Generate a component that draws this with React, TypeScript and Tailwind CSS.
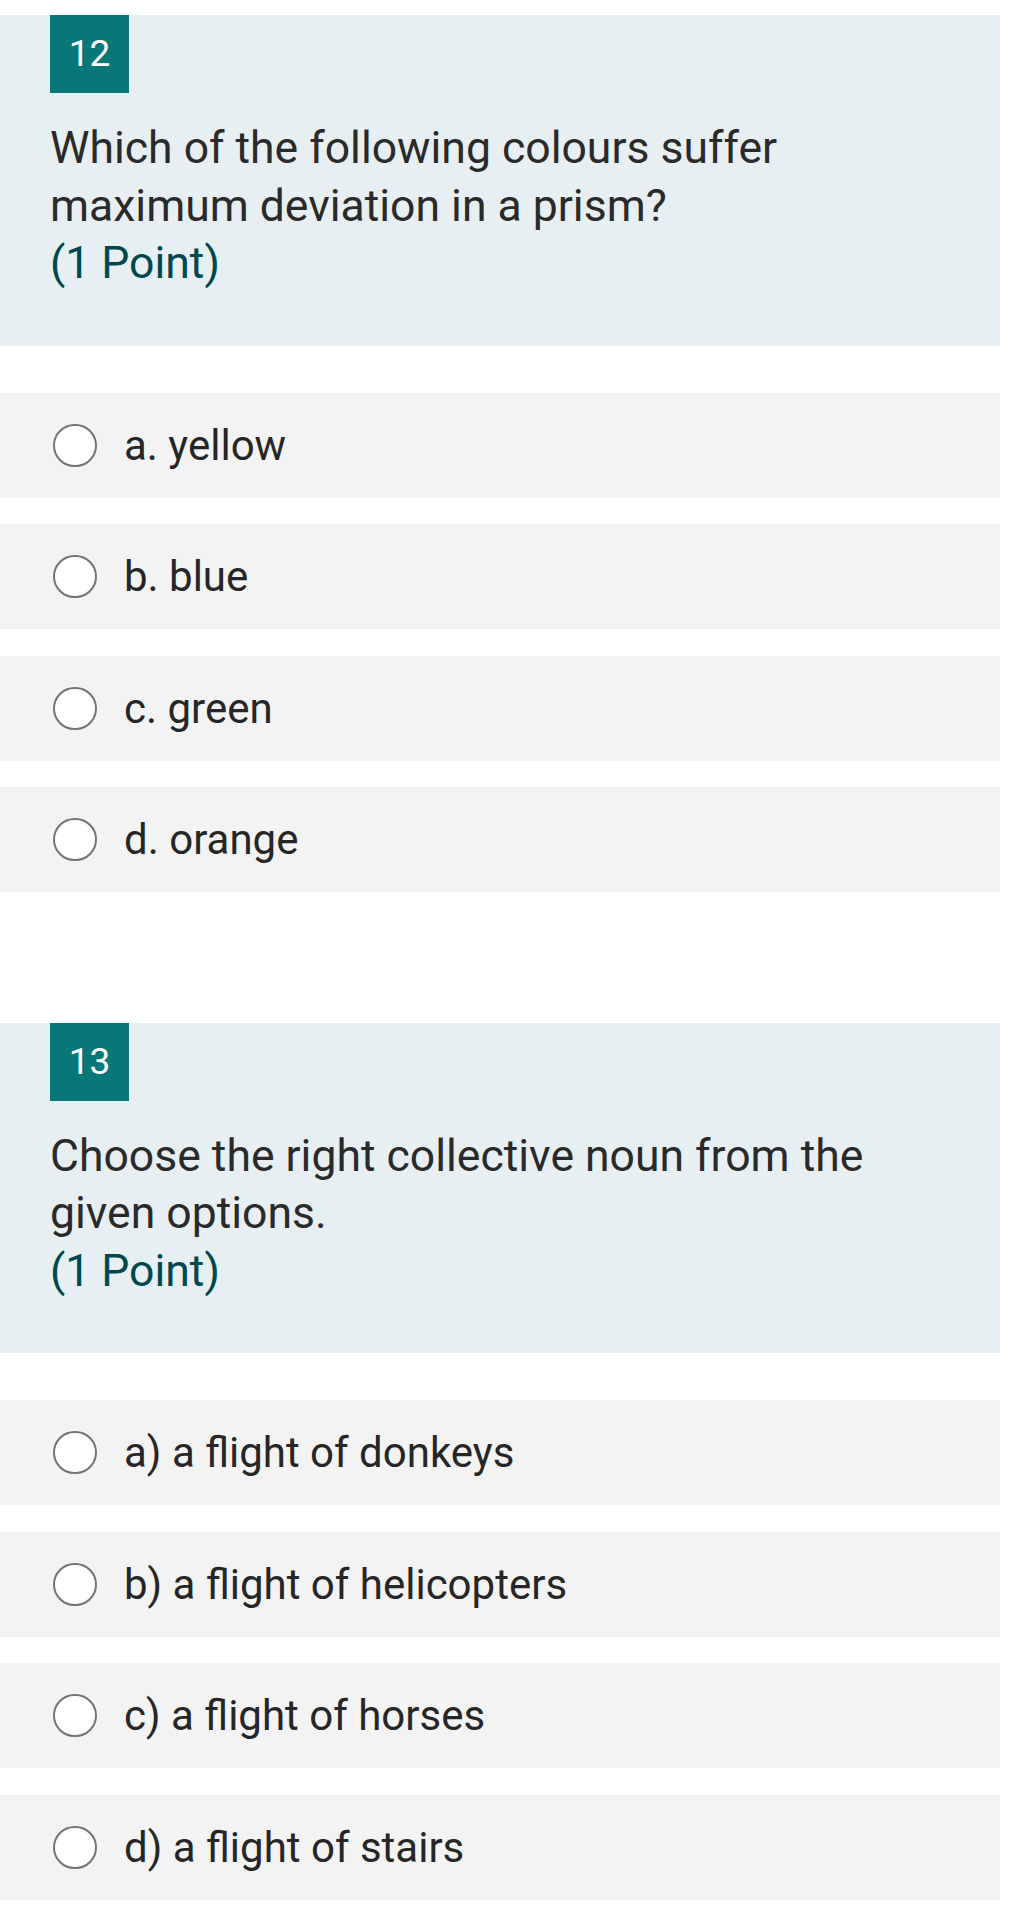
import React from 'react';

type Question = {
  num: number;
  title: string;
  options: string[];
};

const questions: Question[] = [
  {
    num: 12,
    title: 'Which of the following colours suffer maximum deviation in a prism?',
    options: ['a. yellow', 'b. blue', 'c. green', 'd. orange'],
  },
  {
    num: 13,
    title: 'Choose the right collective noun from the given options.',
    options: [
      'a) a flight of donkeys',
      'b) a flight of helicopters',
      'c) a flight of horses',
      'd) a flight of stairs',
    ],
  },
];

function Option({ label }: { label: string }) {
  return (
    <div className="flex h-[105px] items-center bg-[#f3f3f3] pl-[53px]">
      <span className="h-[43px] w-[44px] shrink-0 rounded-full border-2 border-[#747474] bg-white" />
      <span className="ml-[27px] text-[42px] text-[#262626]">{label}</span>
    </div>
  );
}

function QuestionBlock({ q }: { q: Question }) {
  return (
    <div>
      <div className="bg-[#e7eff2] px-[50px] pb-[53px]">
        <div className="flex h-[78px] w-[79px] items-center justify-center bg-[#087777] text-[37px] text-white">
          {q.num}
        </div>
        <div className="mt-[27px] text-[44.5px] leading-[57.5px] text-[#2a2a2a]">
          <p>{q.title}</p>
          <p className="text-[#00484f]">(1 Point)</p>
        </div>
      </div>
      <div className="mt-[47px] flex flex-col gap-[26.5px]">
        {q.options.map((o) => (
          <Option key={o} label={o} />
        ))}
      </div>
    </div>
  );
}

export default function App() {
  return (
    <div className="min-h-[1921px] bg-white font-['Roboto',sans-serif]">
      <div className="w-[1000px] pt-[15px] flex flex-col gap-[130.5px]">
        {questions.map((q) => (
          <QuestionBlock key={q.num} q={q} />
        ))}
      </div>
    </div>
  );
}
